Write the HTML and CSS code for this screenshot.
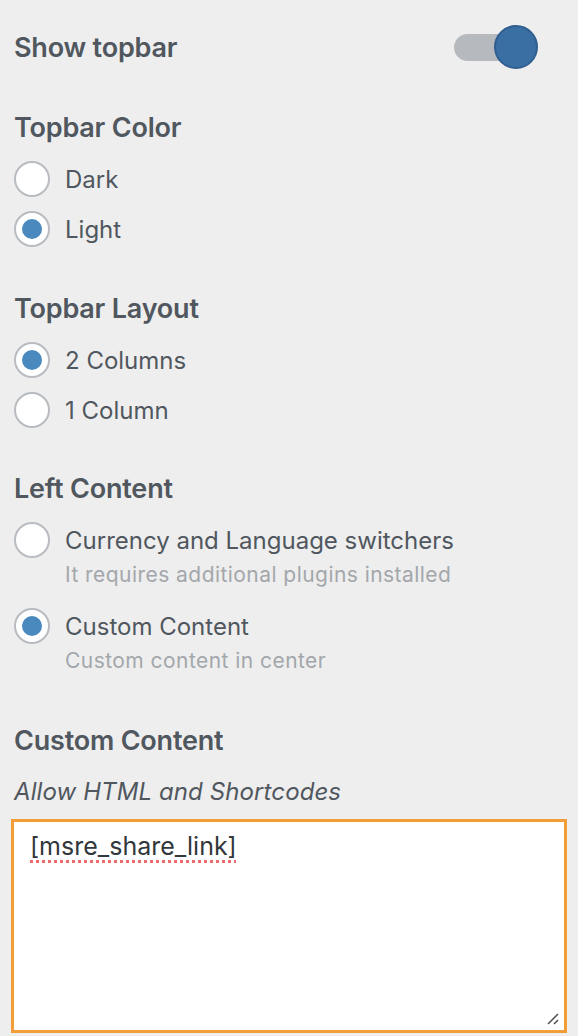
FILE: index.html
```html
<!DOCTYPE html>
<html>
<head>
<meta charset="utf-8">
<link rel="stylesheet" href="styles.css">
</head>
<body>
<div class="panel">
  <div class="toprow">
    <span class="title">Show topbar</span>
    <span class="toggle"><span class="track"></span><span class="thumb"></span></span>
  </div>

  <div class="section s1">
    <div class="heading">Topbar Color</div>
    <div class="option"><span class="radio"></span><span class="label">Dark</span></div>
    <div class="option"><span class="radio checked"></span><span class="label">Light</span></div>
  </div>

  <div class="section s2">
    <div class="heading">Topbar Layout</div>
    <div class="option"><span class="radio checked"></span><span class="label">2 Columns</span></div>
    <div class="option"><span class="radio"></span><span class="label">1 Column</span></div>
  </div>

  <div class="section">
    <div class="heading">Left Content</div>
    <div class="option"><span class="radio"></span><span class="label">Currency and Language switchers</span></div>
    <div class="desc">It requires additional plugins installed</div>
    <div class="option"><span class="radio checked"></span><span class="label">Custom Content</span></div>
    <div class="desc">Custom content in center</div>
  </div>

  <div class="section last">
    <div class="heading">Custom Content</div>
    <div class="hint">Allow HTML and Shortcodes</div>
    <div class="textarea">
      <span class="typo">[msre_share_link]</span>
      <svg class="grip" width="12" height="12" viewBox="0 0 12 12"><path d="M1 11 L11 1 M7 11 L11 7" stroke="#555" stroke-width="1.6" fill="none"/></svg>
    </div>
  </div>
</div>
</body>
</html>
```
FILE: styles.css
```css
html, body {
  margin: 0;
  padding: 0;
  background: #eeeeee;
}
body {
  font-family: Inter, "Noto Sans", "Liberation Sans", sans-serif;
  color: #50575e;
}
.panel {
  padding: 22px 14px 0 14px;
}
.toprow {
  display: flex;
  align-items: center;
  justify-content: space-between;
  height: 50px;
}
.title, .heading {
  font-size: 27px;
  font-weight: 600;
  letter-spacing: -0.2px;
  color: #50575e;
}
.toggle {
  position: relative;
  width: 84px;
  height: 44px;
  margin-right: 26px;
}
.track {
  position: absolute;
  left: 0;
  top: 9px;
  width: 70px;
  height: 27px;
  border-radius: 14px;
  background: #b6babe;
}
.thumb {
  position: absolute;
  right: 0;
  top: 0;
  width: 40px;
  height: 40px;
  border-radius: 50%;
  background: #3a6fa4;
  border: 2px solid #2f5e8f;
}
.section {
  margin-top: 28px;
}
.section.s1 {
  margin-top: 30px;
}
.section.s2 {
  margin-top: 29px;
}
.section.last {
  margin-top: 42px;
}
.heading {
  line-height: 52px;
}
.option {
  display: flex;
  align-items: center;
  height: 50px;
  gap: 15px;
}
.radio {
  box-sizing: border-box;
  width: 36px;
  height: 36px;
  border-radius: 50%;
  border: 2px solid #b8bcc0;
  background: #fff;
  display: flex;
  align-items: center;
  justify-content: center;
  flex: none;
}
.radio.checked::after {
  content: "";
  width: 20px;
  height: 20px;
  border-radius: 50%;
  background: #4a89bd;
}
.label {
  font-size: 24px;
  color: #50575e;
}
.desc {
  margin-left: 51px;
  font-size: 21px;
  letter-spacing: 0.45px;
  line-height: 24px;
  margin-top: -2px;
  margin-bottom: 14px;
  color: #a3a7ab;
}
.hint {
  font-size: 24px;
  font-style: italic;
  letter-spacing: 0.1px;
  line-height: 50px;
  color: #50575e;
}
.textarea {
  position: relative;
  margin: 2px -3px 0 -3px;
  height: 214px;
  box-sizing: border-box;
  border: 3px solid #f29d38;
  background: #fff;
  padding: 7px 16px;
  font-size: 25px;
  line-height: 34px;
  color: #32373c;
}
.typo {
  text-decoration: underline dotted #ef6b6b;
  text-decoration-thickness: 3px;
  text-underline-offset: 5px;
}
.grip {
  position: absolute;
  right: 5px;
  bottom: 5px;
}
```
